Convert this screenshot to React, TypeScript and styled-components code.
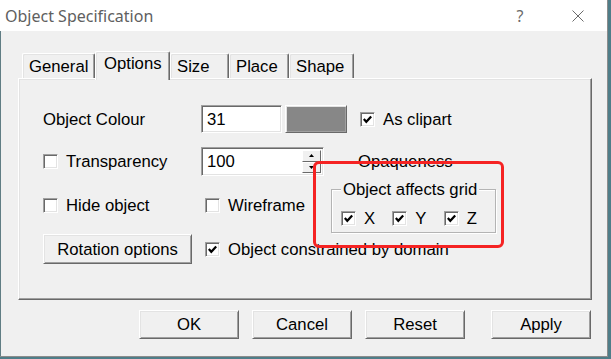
import styled, { createGlobalStyle } from "styled-components";

const GlobalStyle = createGlobalStyle`
  html, body {
    margin: 0;
    padding: 0;
    background: #4f7d88;
    width: 611px;
    height: 359px;
    overflow: hidden;
  }
`;

const Window = styled.div`
  position: relative;
  width: 607px;
  height: 356px;
  border-right: 1px solid #8c8c8c;
  border-bottom: 1px solid #8c8c8c;
  display: flex;
  flex-direction: column;
  font-family: "Liberation Sans", Arial, sans-serif;
  font-size: 16.7px;
  color: #000;
`;

const TitleBar = styled.div`
  height: 31px;
  background: #fff;
  display: flex;
  align-items: center;
  padding-left: 5px;
`;

const Title = styled.div`
  font-family: "Noto Sans", "Open Sans", sans-serif;
  font-size: 16px;
  color: #606060;
  flex: 1;
`;

const Help = styled.div`
  width: 16px;
  text-align: center;
  font-family: "Noto Sans", sans-serif;
  font-size: 16px;
  color: #6a6a6a;
`;

const Close = styled.svg`
  margin-left: 44px;
  margin-right: 23px;
`;

const Body = styled.div`
  flex: 1;
  background: #f0f0f0;
  border-left: 1px solid #607d84;
  padding: 20px 15px 0 17px;
  display: flex;
  flex-direction: column;
`;

const TabStrip = styled.div`
  display: flex;
  align-items: flex-end;
  height: 27px;
  margin-left: 4px;
  position: relative;
  z-index: 1;
`;

const Tab = styled.div<{ $w: number; $active?: boolean }>`
  width: ${(p) => p.$w}px;
  height: ${(p) => (p.$active ? 29 : 25)}px;
  margin-bottom: ${(p) => (p.$active ? -2 : 0)}px;
  box-sizing: border-box;
  background: #f0f0f0;
  border-top: 1px solid #fff;
  border-left: 1px solid #fff;
  border-right: 1px solid #696969;
  box-shadow: inset -1px 0 0 #a0a0a0, inset 1px 1px 0 #e3e3e3;
  border-radius: 2px 2px 0 0;
  padding: ${(p) => (p.$active ? "2px 0 0 8px" : "3px 0 0 6px")};
  line-height: 19px;
  white-space: nowrap;
`;

const Panel = styled.div`
  position: relative;
  height: 222px;
  box-sizing: border-box;
  border-top: 1px solid #fff;
  border-left: 1px solid #fff;
  border-right: 1px solid #696969;
  border-bottom: 1px solid #696969;
  box-shadow: inset -1px -1px 0 #a0a0a0, inset 1px 1px 0 #e3e3e3;
  padding: 26px 0 0 24px;
  display: flex;
  flex-direction: column;
`;

const Row = styled.div<{ $h: number; $top?: number; $start?: boolean }>`
  display: flex;
  align-items: ${(p) => (p.$start ? "flex-start" : "center")};
  height: ${(p) => p.$h}px;
  margin-top: ${(p) => p.$top ?? 0}px;
`;

const Cell = styled.div<{ $w: number; $top?: number }>`
  width: ${(p) => p.$w}px;
  margin-top: ${(p) => p.$top ?? 0}px;
  display: flex;
  align-items: center;
`;

const Label = styled.span`
  line-height: 19px;
  white-space: nowrap;
`;

const Field = styled.div<{ $w: number; $h: number }>`
  width: ${(p) => p.$w}px;
  height: ${(p) => p.$h}px;
  box-sizing: border-box;
  background: #fff;
  border-top: 1px solid #a0a0a0;
  border-left: 1px solid #a0a0a0;
  border-right: 1px solid #fff;
  border-bottom: 1px solid #fff;
  box-shadow: inset 1px 1px 0 #696969, inset -1px -1px 0 #e3e3e3;
  display: flex;
  align-items: center;
  padding: 2px 2px 2px 5px;
`;

const FieldText = styled.span`
  flex: 1;
  line-height: 19px;
`;

const Spin = styled.div`
  width: 19px;
  height: 100%;
  display: flex;
  flex-direction: column;
`;

const SpinButton = styled.div`
  flex: 1;
  background: #f0f0f0;
  border-top: 1px solid #fff;
  border-left: 1px solid #fff;
  border-right: 1px solid #696969;
  border-bottom: 1px solid #696969;
  display: flex;
  align-items: center;
  justify-content: center;
`;

const Swatch = styled.div`
  width: 62px;
  height: 28px;
  margin-left: 3px;
  box-sizing: border-box;
  background: #878787;
  border-top: 1px solid #fff;
  border-left: 1px solid #fff;
  border-right: 1px solid #696969;
  border-bottom: 1px solid #696969;
  box-shadow: inset 1px 1px 0 #e3e3e3, inset -1px -1px 0 #a0a0a0;
`;

const Box = styled.span`
  width: 15px;
  height: 15px;
  flex: none;
  box-sizing: border-box;
  background: #fff;
  border-top: 1px solid #a0a0a0;
  border-left: 1px solid #a0a0a0;
  border-right: 1px solid #fff;
  border-bottom: 1px solid #fff;
  box-shadow: inset 1px 1px 0 #696969, inset -1px -1px 0 #e3e3e3;
  margin-right: 8px;
  display: flex;
  align-items: center;
  justify-content: center;
`;

const CheckWrap = styled.div<{ $left: number }>`
  display: flex;
  align-items: center;
  margin-left: ${(p) => p.$left}px;
`;

const Check = ({ label, checked, left = 0 }: { label: string; checked?: boolean; left?: number }) => (
  <CheckWrap $left={left}>
    <Box>
      {checked && (
        <svg width="9" height="9" viewBox="0 0 9 9">
          <path d="M0.8 4 L3.3 6.8 L8.2 1.4" fill="none" stroke="#000" strokeWidth="2.2" />
        </svg>
      )}
    </Box>
    <Label>{label}</Label>
  </CheckWrap>
);

const Button = styled.div<{ $w: number; $h: number; $left?: number }>`
  width: ${(p) => p.$w}px;
  height: ${(p) => p.$h}px;
  margin-left: ${(p) => p.$left ?? 0}px;
  box-sizing: border-box;
  background: #f0f0f0;
  border-top: 1px solid #fff;
  border-left: 1px solid #fff;
  border-right: 1px solid #696969;
  border-bottom: 1px solid #696969;
  box-shadow: inset 1px 1px 0 #e3e3e3, inset -1px -1px 0 #a0a0a0;
  display: flex;
  align-items: center;
  justify-content: center;
  line-height: 19px;
  flex: none;
`;

const Group = styled.div`
  position: relative;
  width: 165px;
  height: 44px;
  box-sizing: border-box;
  border: 1px solid #b4b4b4;
  box-shadow: inset 1px 1px 0 #fff, 1px 1px 0 #fff;
  padding: 19px 0 0 9px;
  display: flex;
`;

const Legend = styled.span`
  position: absolute;
  top: -10px;
  left: 9px;
  padding: 0 2px;
  background: #f0f0f0;
  line-height: 19px;
  white-space: nowrap;
`;

const GroupItem = styled.div`
  width: 55px;
`;

const Marker = styled.div`
  position: absolute;
  left: 294px;
  top: 82px;
  width: 191px;
  height: 87px;
  box-sizing: border-box;
  border: 3px solid #f52323;
  border-radius: 6px;
`;

const ButtonRow = styled.div`
  display: flex;
  justify-content: flex-end;
  margin-top: 10px;
  padding-right: 1px;
  gap: 13px;
`;

export default function App() {
  return (
    <>
      <GlobalStyle />
      <Window>
        <TitleBar>
          <Title>Object Specification</Title>
          <Help>?</Help>
          <Close width="12" height="12" viewBox="0 0 12 12">
            <path d="M0.5 0.5 L11.5 11.5 M11.5 0.5 L0.5 11.5" stroke="#6a6a6a" strokeWidth="1" />
          </Close>
        </TitleBar>
        <Body>
          <TabStrip>
            <Tab $w={73}>General</Tab>
            <Tab $w={75} $active>
              Options
            </Tab>
            <Tab $w={59}>Size</Tab>
            <Tab $w={60}>Place</Tab>
            <Tab $w={65}>Shape</Tab>
          </TabStrip>
          <Panel>
            <Row $h={28}>
              <Cell $w={158}>
                <Label>Object Colour</Label>
              </Cell>
              <Field $w={81} $h={28}>
                <FieldText>31</FieldText>
              </Field>
              <Swatch />
              <Check label="As clipart" checked left={13} />
            </Row>
            <Row $h={29} $top={14}>
              <Cell $w={158}>
                <Check label="Transparency" />
              </Cell>
              <Field $w={123} $h={29}>
                <FieldText>100</FieldText>
                <Spin>
                  <SpinButton>
                    <svg width="5" height="3" viewBox="0 0 5 3">
                      <path d="M2.5 0 L5 3 L0 3 Z" fill="#000" />
                    </svg>
                  </SpinButton>
                  <SpinButton>
                    <svg width="5" height="3" viewBox="0 0 5 3">
                      <path d="M0 0 L5 0 L2.5 3 Z" fill="#000" />
                    </svg>
                  </SpinButton>
                </Spin>
              </Field>
              <CheckWrap $left={34}>
                <Label>Opaqueness</Label>
              </CheckWrap>
            </Row>
            <Row $h={44} $top={13} $start>
              <Cell $w={162} $top={7}>
                <Check label="Hide object" />
              </Cell>
              <Cell $w={126} $top={7}>
                <Check label="Wireframe" />
              </Cell>
              <Group>
                <Legend>Object affects grid</Legend>
                <GroupItem>
                  <Check label="X" checked />
                </GroupItem>
                <GroupItem>
                  <Check label="Y" checked />
                </GroupItem>
                <GroupItem>
                  <Check label="Z" checked />
                </GroupItem>
              </Group>
            </Row>
            <Row $h={30} $top={1}>
              <Button $w={149} $h={30}>
                Rotation options
              </Button>
              <Check label="Object constrained by domain" checked left={13} />
            </Row>
            <Marker />
          </Panel>
          <ButtonRow>
            <Button $w={100} $h={29}>OK</Button>
            <Button $w={100} $h={29}>Cancel</Button>
            <Button $w={100} $h={29}>Reset</Button>
            <Button $w={100} $h={29} $left={13}>
              Apply
            </Button>
          </ButtonRow>
        </Body>
      </Window>
    </>
  );
}
